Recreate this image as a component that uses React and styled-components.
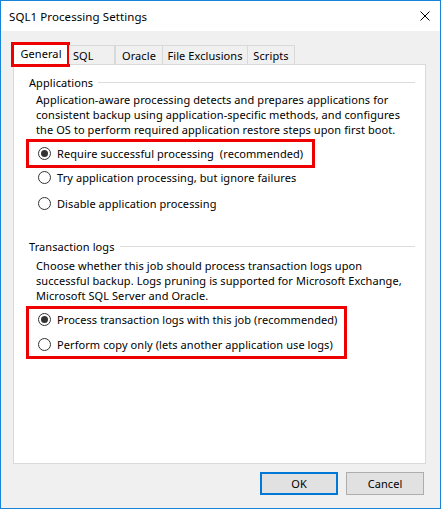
import React from "react";
import styled, { createGlobalStyle } from "styled-components";

const GlobalStyle = createGlobalStyle`
  html, body { margin: 0; padding: 0; background: #ffffff; }
  body {
    font-family: "Noto Sans", "Open Sans", sans-serif;
    font-size: 11px;
    letter-spacing: 0.08px;
    color: #000000;
  }
  * { box-sizing: border-box; }
`;

const Window = styled.div`
  width: 441px;
  height: 509px;
  border: 1px solid #1883d7;
  background: #f0f0f0;
  display: flex;
  flex-direction: column;
`;

const TitleBar = styled.div`
  height: 30px;
  background: #ffffff;
  display: flex;
  align-items: center;
  justify-content: space-between;
  padding: 0 10px 0 8px;
`;

const Title = styled.div`
  font-size: 11.5px;
  line-height: 15px;
`;

const CloseIcon = styled.svg`
  width: 10px;
  height: 10px;
  display: block;
`;

const Body = styled.div`
  flex: 1;
  display: flex;
  flex-direction: column;
  padding: 12px 14px 0 12px;
`;

const TabStrip = styled.div`
  display: flex;
  align-items: flex-end;
  height: 21px;
  position: relative;
  z-index: 1;
`;

const Tab = styled.div`
  position: relative;
  width: ${(p) => p.$w}px;
  height: ${(p) => (p.$active ? 22 : 19)}px;
  margin-bottom: ${(p) => (p.$active ? -1 : 0)}px;
  background: ${(p) => (p.$active ? "#ffffff" : "#f0f0f0")};
  border: 1px solid #d9d9d9;
  border-bottom: none;
  border-left-width: ${(p) => (p.$noLeft ? 0 : 1)}px;
  display: flex;
  align-items: center;
  justify-content: ${(p) => (p.$left ? "flex-start" : "center")};
  padding-left: ${(p) => (p.$left ? 4 : 0)}px;
  padding-bottom: ${(p) => (p.$active ? 3 : 0)}px;
  line-height: 15px;
  white-space: nowrap;
`;

const TabMark = styled.span`
  position: absolute;
  left: -3px;
  top: -2px;
  right: -2px;
  bottom: -2px;
  border: 3px solid #ee0000;
  pointer-events: none;
`;

const Panel = styled.div`
  height: 400px;
  background: #ffffff;
  border: 1px solid #d9d9d9;
  padding: 10px 10px 0 15px;
  display: flex;
  flex-direction: column;
`;

const GroupHeader = styled.div`
  display: flex;
  align-items: center;
  line-height: 15px;
  margin-top: ${(p) => p.$mt || 0}px;
`;

const Rule = styled.div`
  flex: 1;
  height: 1px;
  background: #dcdcdc;
  margin-left: 5px;
  margin-top: -1px;
`;

const Description = styled.p`
  margin: ${(p) => p.$mt || 0}px 0 0 7px;
  line-height: 15px;
  white-space: nowrap;
`;

const Options = styled.div`
  margin-left: 7px;
  display: flex;
  flex-direction: column;
  align-items: flex-start;
`;

const Highlight = styled.div`
  margin: ${(p) => p.$mt}px 0 0 -10px;
  border: 3px solid #ee0000;
  padding: ${(p) => p.$pt}px ${(p) => p.$pr}px ${(p) => p.$pb}px 7px;
  display: flex;
  flex-direction: column;
  gap: ${(p) => p.$gap || 0}px;
`;

const RadioRow = styled.label`
  display: flex;
  align-items: center;
  height: ${(p) => p.$h || 20}px;
  margin-top: ${(p) => p.$mt || 0}px;
  padding-left: 2px;
  gap: 6px;
  line-height: 15px;
  white-space: nowrap;
`;

const RadioCircle = styled.span`
  width: 13px;
  height: 13px;
  border-radius: 50%;
  border: 1px solid #333333;
  background: #ffffff;
  display: flex;
  align-items: center;
  justify-content: center;
  flex: none;
  &::after {
    content: "";
    width: 7px;
    height: 7px;
    border-radius: 50%;
    background: #333333;
    display: ${(p) => (p.$checked ? "block" : "none")};
  }
`;

const ButtonRow = styled.div`
  display: flex;
  justify-content: flex-end;
  gap: 8px;
  margin-top: 8px;
  padding-right: 2px;
`;

const Button = styled.button`
  width: 78px;
  height: 23px;
  background: #e1e1e1;
  border: ${(p) => (p.$default ? "2px solid #0078d7" : "1px solid #adadad")};
  font-family: inherit;
  font-size: 11px;
  letter-spacing: inherit;
  color: #000000;
  padding: 0;
  line-height: 15px;
`;

function Radio({ checked, children, h, mt }) {
  return (
    <RadioRow $h={h} $mt={mt}>
      <RadioCircle $checked={checked} />
      <span>{children}</span>
    </RadioRow>
  );
}

export default function App() {
  return (
    <>
      <GlobalStyle />
      <Window>
        <TitleBar>
          <Title>SQL1 Processing Settings</Title>
          <CloseIcon viewBox="0 0 10 10">
            <path d="M0.5 0.5 L9.5 9.5 M9.5 0.5 L0.5 9.5" stroke="#000" strokeWidth="1" fill="none" />
          </CloseIcon>
        </TitleBar>
        <Body>
          <TabStrip>
            <Tab $active $w={56}>
              General
              <TabMark />
            </Tab>
            <Tab $w={46} $noLeft $left>SQL</Tab>
            <Tab $w={48}>Oracle</Tab>
            <Tab $w={85} $noLeft>File Exclusions</Tab>
            <Tab $w={47} $noLeft>Scripts</Tab>
          </TabStrip>
          <Panel>
            <GroupHeader>
              Applications
              <Rule />
            </GroupHeader>
            <Description $mt={2}>
              Application-aware processing detects and prepares applications for
              <br />
              consistent backup using application-specific methods, and configures
              <br />
              the OS to perform required application restore steps upon first boot.
            </Description>
            <Options>
              <Highlight $mt={2} $pt={1} $pb={2} $pr={9}>
                <Radio checked>Require successful processing&nbsp; (recommended)</Radio>
              </Highlight>
              <Radio h={18}>Try application processing, but ignore failures</Radio>
              <Radio h={18} mt={8}>Disable application processing</Radio>
            </Options>
            <GroupHeader $mt={27}>
              Transaction logs
              <Rule />
            </GroupHeader>
            <Description $mt={4}>
              Choose whether this job should process transaction logs upon
              <br />
              successful backup. Logs pruning is supported for Microsoft Exchange,
              <br />
              Microsoft SQL Server and Oracle.
            </Description>
            <Options>
              <Highlight $mt={3} $pt={0} $pb={2} $pr={6} $gap={5}>
                <Radio checked>Process transaction logs with this job (recommended)</Radio>
                <Radio>Perform copy only (lets another application use logs)</Radio>
              </Highlight>
            </Options>
          </Panel>
          <ButtonRow>
            <Button $default>OK</Button>
            <Button>Cancel</Button>
          </ButtonRow>
        </Body>
      </Window>
    </>
  );
}
